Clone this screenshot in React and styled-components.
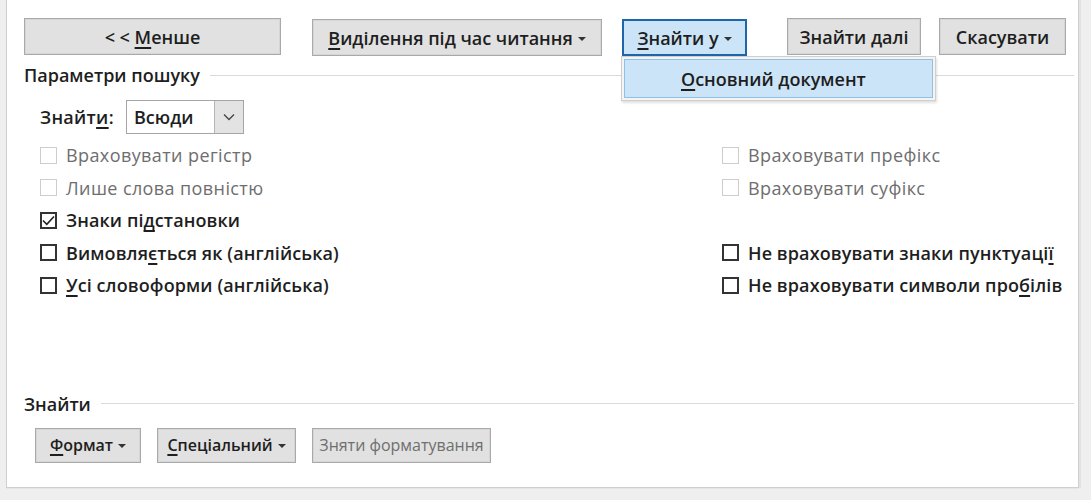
import React from "react";
import styled, { createGlobalStyle } from "styled-components";

const Global = createGlobalStyle`
  html, body { margin: 0; padding: 0; background: #efefef; }
  body { font-family: "Open Sans", "Noto Sans", sans-serif; }
`;

const Page = styled.div`
  width: 1091px;
  height: 500px;
  background: #efefef;
  padding-left: 6px;
  box-sizing: border-box;
  overflow: hidden;
`;

const Panel = styled.div`
  position: relative;
  width: 1073px;
  height: 488px;
  box-sizing: border-box;
  background: #fff;
  border: 1px solid #cfcfcf;
  border-top: none;
  box-shadow: 2px 0 0 #e2e2e2, 0 1px 0 #e6e6e6;
  padding: 18px 0 0 17px;
  display: flex;
  flex-direction: column;
  color: #1e1e1e;
  font-size: 18px;
  font-weight: 600;
  overflow: hidden;
`;

const TopBar = styled.div`
  display: flex;
  align-items: flex-start;
  height: 38px;
`;

const Button = styled.div`
  position: relative;
  box-sizing: border-box;
  width: ${(p) => p.$w}px;
  height: ${(p) => p.$h || 37}px;
  margin-left: ${(p) => p.$ml || 0}px;
  margin-top: ${(p) => p.$mt || 0}px;
  display: flex;
  align-items: center;
  justify-content: center;
  gap: 5px;
  font-size: ${(p) => p.$fs || 18}px;
  background: ${(p) => (p.$active ? "#cce4f7" : "#e1e1e1")};
  border: ${(p) => (p.$active ? "2px solid #1f65a8" : "1px solid #a9a9a9")};
  box-shadow: ${(p) => (p.$active ? "none" : "inset 0 0 0 1px #d6d6d6")};
  color: ${(p) => (p.$disabled ? "#6f6f6f" : "#1e1e1e")};
  font-weight: ${(p) => (p.$disabled ? 500 : 600)};
  white-space: nowrap;
`;

const Caret = styled.span`
  width: 0;
  height: 0;
  border-left: 4px solid transparent;
  border-right: 4px solid transparent;
  border-top: 4px solid #333;
  margin-top: 2px;
`;

const U = styled.span`
  text-decoration: underline;
  text-underline-offset: 3px;
  text-decoration-thickness: 1.5px;
`;

const Menu = styled.div`
  position: absolute;
  left: -3px;
  top: 35px;
  width: 315px;
  height: 45px;
  box-sizing: border-box;
  background: #f4f4f4;
  border: 1px solid #cfcfcf;
  box-shadow: 1px 2px 2px rgba(0, 0, 0, 0.12);
  padding: 2px;
  z-index: 2;
`;

const MenuItem = styled.div`
  height: 100%;
  box-sizing: border-box;
  background: #cce4f7;
  border: 1px solid #8fc0e8;
  display: flex;
  align-items: center;
  padding-left: 56px;
  font-weight: 600;
`;

const GroupTitle = styled.div`
  display: flex;
  align-items: center;
  gap: 10px;
  height: 24px;
  margin-top: ${(p) => p.$mt}px;
  margin-right: 4px;
  &::after {
    content: "";
    flex: 1;
    height: 1px;
    background: #d9d9d9;
  }
`;

const FindRow = styled.div`
  display: flex;
  align-items: center;
  margin-top: 13px;
  padding-left: 16px;
  height: 34px;
`;

const Label = styled.span`
  width: 86px;
  letter-spacing: 0.3px;
`;

const Select = styled.div`
  display: flex;
  width: 118px;
  height: 34px;
  box-sizing: border-box;
  border: 1px solid #a5a5a5;
`;

const SelectValue = styled.div`
  flex: 1;
  display: flex;
  align-items: center;
  padding-left: 7px;
  font-weight: 600;
`;

const SelectArrow = styled.div`
  width: 28px;
  border-left: 1px solid #b5b5b5;
  background: #e3e3e3;
  display: flex;
  align-items: center;
  justify-content: center;
`;

const Options = styled.div`
  display: grid;
  grid-template-columns: 682px 1fr;
  grid-auto-rows: 32.5px;
  margin-top: 5px;
  padding-left: 16px;
`;

const Option = styled.div`
  display: flex;
  align-items: center;
  gap: 9px;
  color: ${(p) => (p.$disabled ? "#6e6e6e" : "#1e1e1e")};
  font-weight: ${(p) => (p.$disabled ? 500 : 600)};
  letter-spacing: ${(p) => (p.$disabled ? "0.4px" : "0.1px")};
  white-space: nowrap;
`;

const Box = styled.span`
  width: 17px;
  height: 17px;
  box-sizing: border-box;
  border: ${(p) => (p.$disabled ? "1px solid #cdcdcd" : "2px solid #333")};
  display: flex;
  align-items: center;
  justify-content: center;
  flex: none;
`;

const BottomBar = styled.div`
  display: flex;
  margin-top: 12px;
  padding-left: 11px;
`;

function Check({ label, disabled, checked }) {
  return (
    <Option $disabled={disabled}>
      <Box $disabled={disabled}>
        {checked && (
          <svg width="13" height="11" viewBox="0 0 13 11">
            <path d="M1 5.5 L4.8 9.3 L12 1.5" fill="none" stroke="#222" strokeWidth="1.6" />
          </svg>
        )}
      </Box>
      <span>{label}</span>
    </Option>
  );
}

export default function App() {
  return (
    <Page>
      <Global />
      <Panel>
        <TopBar>
          <Button $w={257}>
            <span>
              {"< < "}
              <U>М</U>енше
            </span>
          </Button>
          <Button $w={290} $ml={31} $mt={1}>
            <span>
              <U>В</U>иділення під час читання
            </span>
            <Caret />
          </Button>
          <Button $w={125} $ml={20} $mt={1} $active>
            <span>
              <U>З</U>найти у
            </span>
            <Caret />
            <Menu>
              <MenuItem>
                <span>
                  <U>О</U>сновний документ
                </span>
              </MenuItem>
            </Menu>
          </Button>
          <Button $w={134} $ml={40}>
            <span>
              Знайти <U>д</U>алі
            </span>
          </Button>
          <Button $w={127} $ml={18}>
            Скасувати
          </Button>
        </TopBar>

        <GroupTitle $mt={7}>Параметри пошуку</GroupTitle>

        <FindRow>
          <Label>
            Знайт<U>и</U>:
          </Label>
          <Select>
            <SelectValue>Всюди</SelectValue>
            <SelectArrow>
              <svg width="12" height="8" viewBox="0 0 12 8">
                <path d="M1 1.5 L6 6.5 L11 1.5" fill="none" stroke="#444" strokeWidth="1.3" />
              </svg>
            </SelectArrow>
          </Select>
        </FindRow>

        <Options>
          <Check disabled label="Враховувати регістр" />
          <Check disabled label="Враховувати префікс" />
          <Check disabled label="Лише слова повністю" />
          <Check disabled label="Враховувати суфікс" />
          <Check checked label={<>Знаки пі<U>д</U>становки</>} />
          <span />
          <Check label={<>Вимовля<U>є</U>ться як (англійська)</>} />
          <Check label={<>Не враховувати знаки пунктуаці<U>ї</U></>} />
          <Check label={<><U>У</U>сі словоформи (англійська)</>} />
          <Check label={<>Не враховувати символи про<U>б</U>ілів</>} />
        </Options>

        <GroupTitle $mt={90}>Знайти</GroupTitle>

        <BottomBar>
          <Button $w={106} $h={35} $fs={16}>
            <span>
              <U>Ф</U>ормат
            </span>
            <Caret />
          </Button>
          <Button $w={139} $h={35} $ml={16} $fs={16}>
            <span>
              <U>С</U>пеціальний
            </span>
            <Caret />
          </Button>
          <Button $w={179} $h={35} $ml={16} $fs={16} $disabled>
            Зняти форматування
          </Button>
        </BottomBar>
      </Panel>
    </Page>
  );
}
